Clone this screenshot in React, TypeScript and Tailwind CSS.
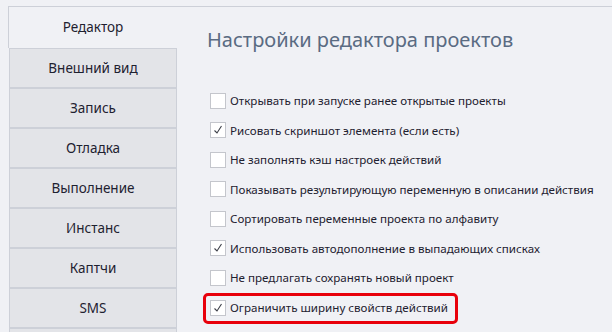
const tabs = ["Внешний вид", "Запись", "Отладка", "Выполнение", "Инстанс", "Каптчи", "SMS", ""];

const options = [
  { label: "Открывать при запуске ранее открытые проекты", checked: false },
  { label: "Рисовать скриншот элемента (если есть)", checked: true },
  { label: "Не заполнять кэш настроек действий", checked: false },
  { label: "Показывать результирующую переменную в описании действия", checked: false },
  { label: "Сортировать переменные проекта по алфавиту", checked: false },
  { label: "Использовать автодополнение в выпадающих списках", checked: true },
  { label: "Не предлагать сохранять новый проект", checked: false },
];

function Checkbox({ checked }: { checked: boolean }) {
  return (
    <span className="flex h-[16px] w-[16px] shrink-0 items-center justify-center border border-[#c4c6cc] bg-white">
      {checked && (
        <svg width="12" height="12" viewBox="0 0 12 12" fill="none">
          <path d="M2.5 6.5 L5 9 L9.5 2" stroke="#3c3f48" strokeWidth="1.1" />
        </svg>
      )}
    </span>
  );
}

function Option({ label, checked }: { label: string; checked: boolean }) {
  return (
    <div className="flex h-[29.5px] items-center gap-[4px]">
      <Checkbox checked={checked} />
      <span className="whitespace-nowrap text-[11.6px] text-[#1e2130]">{label}</span>
    </div>
  );
}

export default function App() {
  return (
    <div
      className="h-[332px] w-[612px] overflow-hidden bg-[#f0f1f5] pl-[8px] pt-[6px]"
      style={{ fontFamily: '"Noto Sans", sans-serif' }}
    >
      <div className="flex h-full border-t border-[#cdd0d8]">
        <div className="flex w-[169px] shrink-0 flex-col">
          <div className="flex h-[41px] shrink-0 items-center justify-center border-l border-[#cdd0d8] text-[13.5px] text-[#1e2130]">
            Редактор
          </div>
          {tabs.map((t, i) => (
            <div
              key={i}
              className="ml-[1px] flex h-[40px] shrink-0 items-center justify-center border border-[#cdd0d8] bg-[#e3e4e8] text-[13.5px] text-[#1e2130]"
            >
              {t}
            </div>
          ))}
        </div>
        <div className="flex-1 pl-[30px]">
          <h1 className="mt-[19px] text-[20px] leading-[28px] text-[#5a6b82]">Настройки редактора проектов</h1>
          <div className="mt-[32px] flex flex-col pl-[3px]">
            {options.map((o) => (
              <Option key={o.label} {...o} />
            ))}
            <div className="-ml-[7px] flex h-[31px] w-fit items-center gap-[4px] rounded-[5px] border-[3px] border-[#e8000b] pl-[4px] pr-[7px]">
              <Checkbox checked />
              <span className="whitespace-nowrap text-[11.6px] text-[#1e2130]">Ограничить ширину свойств действий</span>
            </div>
          </div>
        </div>
      </div>
    </div>
  );
}
